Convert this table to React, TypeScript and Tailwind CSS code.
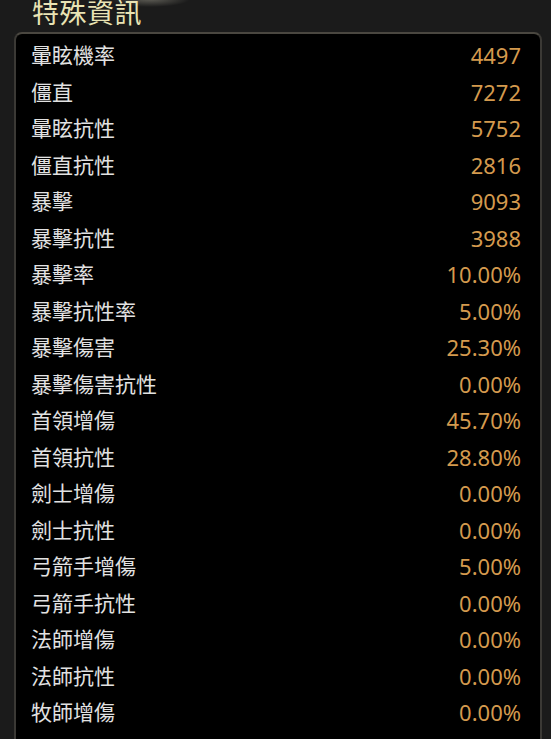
const STATS: Array<[string, string]> = [
  ["暈眩機率", "4497"],
  ["僵直", "7272"],
  ["暈眩抗性", "5752"],
  ["僵直抗性", "2816"],
  ["暴擊", "9093"],
  ["暴擊抗性", "3988"],
  ["暴擊率", "10.00%"],
  ["暴擊抗性率", "5.00%"],
  ["暴擊傷害", "25.30%"],
  ["暴擊傷害抗性", "0.00%"],
  ["首領增傷", "45.70%"],
  ["首領抗性", "28.80%"],
  ["劍士增傷", "0.00%"],
  ["劍士抗性", "0.00%"],
  ["弓箭手增傷", "5.00%"],
  ["弓箭手抗性", "0.00%"],
  ["法師增傷", "0.00%"],
  ["法師抗性", "0.00%"],
  ["牧師增傷", "0.00%"],
  ["牧師抗性", "0.00%"],
];

export default function App() {
  return (
    <div
      className="w-[551px] h-[739px] overflow-hidden bg-[#1b1b1b]"
      style={{ fontFamily: '"Noto Sans", "Noto Sans CJK TC", sans-serif' }}
    >
      {/* header with faint glow behind the title */}
      <div className="h-[33px] pl-[32px] bg-[radial-gradient(ellipse_40px_8px_at_150px_0px,rgba(255,250,225,0.3),transparent)]">
        <h2 className="text-[27px] leading-[27px] -mt-[1px] text-[#e9e3b4] tracking-[0.5px]">
          特殊資訊
        </h2>
      </div>

      <div className="ml-[14px] mr-[9px] h-[720px] rounded-lg border-2 border-[#3b3935] border-t-[#4a4740] bg-black pt-[3.5px] pl-[15px] pr-[19px] overflow-hidden">
        {STATS.map(([label, value]) => (
          <div key={label} className="flex items-center justify-between h-[36.5px]">
            <span className="text-[21px] text-[#e2e2e2]">{label}</span>
            <span className="text-[22px] text-[#d49a4e]">{value}</span>
          </div>
        ))}
      </div>
    </div>
  );
}
